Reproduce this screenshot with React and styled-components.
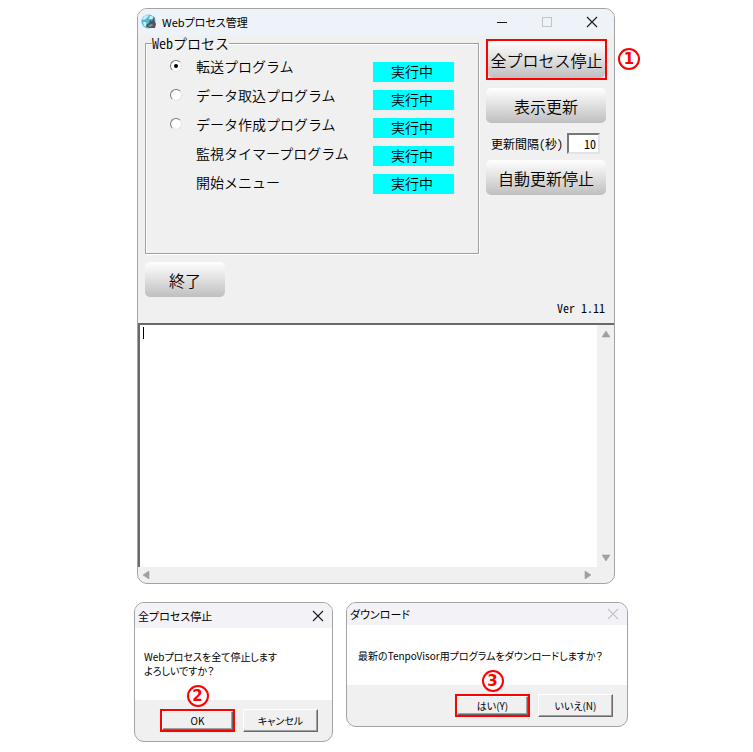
import React, { useState } from 'react'
import styled, { createGlobalStyle } from 'styled-components'

const GlobalStyle = createGlobalStyle`
  * {
    box-sizing: border-box;
  }
  body {
    margin: 0;
    background: #fff;
    color: #000;
    font-family: "Noto Sans CJK JP", sans-serif;
    font-weight: 350;
  }
  button, input, textarea {
    font-family: inherit;
    font-weight: inherit;
    color: inherit;
  }
`

const Page = styled.main`
  padding: 8px 0 8px 9px;
`

const Scene = styled.div`
  width: 100%;
  max-width: 494px;
  margin: 0 auto;
`

const AppWindow = styled.section`
  max-width: 478px;
  margin: 0 13px 18px 3px;
  border: 1px solid #a3a3a3;
  border-radius: 10px;
  background: #f0f0f0;
`

const TitleBar = styled.header`
  display: flex;
  align-items: center;
  height: 26px;
  padding: 0 15px 0 3px;
  border-radius: 9px 9px 0 0;
  background: #eef3f9;
`

const Title = styled.h1`
  flex: 1;
  margin: 0;
  padding-left: ${props => props.$inset || '0'};
  font-size: 11px;
  line-height: 20px;
  font-weight: 400;
  font-feature-settings: "palt";
`

const WindowButtons = styled.div`
  display: flex;
  gap: 31px;
`

const IconButton = styled.button`
  display: flex;
  align-items: center;
  justify-content: center;
  width: 14px;
  height: 14px;
  padding: 0;
  border: 0;
  background: none;
  color: ${props => props.$faded ? '#c4c4c8' : '#1a1a1a'};
`

const Panel = styled.div`
  display: grid;
  grid-template-columns: 1fr 121px;
  gap: 8px 7px;
  padding: 0 7px 6px;
`

const Group = styled.fieldset`
  display: flex;
  justify-content: space-between;
  min-width: 0;
  height: 219px;
  margin: 0;
  padding: 0 24px;
  border: 1px solid #a0a0a0;
  box-shadow: 1px 1px 0 #fff, inset 1px 1px 0 #fff;
`

const Legend = styled.legend`
  margin-left: -18px;
  padding: 0;
  font-size: 14px;
  line-height: 16px;
  font-feature-settings: "hwid";
`

const ProcessList = styled.div`
  display: flex;
  flex-direction: column;
`

const ProcessRow = styled.label`
  display: flex;
  align-items: center;
  gap: 14px;
  height: 29px;
  padding-left: ${props => props.$plain ? '26px' : '0'};
  font-size: 14px;
  white-space: nowrap;
`

const Radio = styled.input`
  appearance: none;
  display: grid;
  place-items: center;
  width: 12px;
  height: 12px;
  margin: 0;
  border: 1px solid;
  border-color: #777 #e3e3e3 #e3e3e3 #777;
  border-radius: 50%;
  background: #fff;
  &:checked::after {
    content: "";
    width: 4px;
    height: 4px;
    border-radius: 50%;
    background: #000;
  }
`

const StatusList = styled.div`
  display: flex;
  flex-direction: column;
  gap: 8px;
  padding-top: 11px;
`

const Status = styled.output`
  width: 81px;
  height: 20px;
  background: #00ffff;
  font-size: 14px;
  line-height: 18px;
  text-align: center;
  padding-right: 3px;
`

const Actions = styled.div`
  display: flex;
  flex-direction: column;
  padding-top: 4px;
`

const GlossyButton = styled.button`
  width: ${props => props.$width || '120px'};
  height: ${props => props.$tall ? '37px' : '35px'};
  padding: 0;
  border: 0;
  border-radius: 5px;
  background: linear-gradient(#fff, #e3e3e3 45%, #bfbfbf);
  font-size: 16px;
  line-height: 24px;
  white-space: nowrap;
`

const Highlight = styled.div`
  position: relative;
  margin-bottom: 8px;
  border: 2px solid #f00;
`

const Callout = styled.span`
  position: absolute;
  ${props => props.$side === 'right' ? 'left: 130px; top: 7px;' : 'left: calc(50% - 11px); top: -26px;'}
  width: 22px;
  height: 22px;
  border: 2px solid #f00;
  border-radius: 50%;
  background: #fff;
  color: #f00;
  font: 700 15px/18px "DejaVu Sans", sans-serif;
  text-align: center;
`

const Interval = styled.label`
  display: flex;
  align-items: center;
  justify-content: space-between;
  padding: 10px 7px 6px 5px;
  font-size: 12px;
  font-weight: 400;
  line-height: 18px;
  font-feature-settings: "hwid";
  white-space: nowrap;
`

const IntervalInput = styled.input`
  width: 33px;
  height: 21px;
  padding: 0 2px;
  border: 2px solid;
  border-color: #777 #e3e3e3 #e3e3e3 #777;
  background: #fff;
  font-size: 12px;
  font-feature-settings: "hwid";
  text-align: right;
`

const PanelFooter = styled.div`
  grid-column: 1 / -1;
  display: flex;
  justify-content: space-between;
  height: 55px;
`

const Version = styled.span`
  align-self: flex-end;
  padding-right: 2px;
  font-size: 12px;
  font-weight: 400;
  line-height: 18px;
  font-feature-settings: "hwid";
`

const LogFrame = styled.div`
  display: grid;
  grid-template-columns: 1fr 17px;
  border-top: 2px solid #696969;
`

const LogArea = styled.div`
  position: relative;
  height: 242px;
  border-left: 2px solid #696969;
`

const Log = styled.textarea`
  display: block;
  width: 100%;
  height: 100%;
  padding: 2px 4px;
  border: 0;
  outline: 0;
  resize: none;
  background: #fff;
  font-size: 12px;
`

const Caret = styled.span`
  position: absolute;
  left: 3px;
  top: 2px;
  width: 1px;
  height: 12px;
  background: #000;
`

const ScrollBar = styled.div`
  display: flex;
  flex-direction: ${props => props.$vertical ? 'column' : 'row'};
  align-items: center;
  justify-content: space-between;
  padding: ${props => props.$vertical ? '5px 0' : '0 5px'};
  height: ${props => props.$vertical ? 'auto' : '16px'};
`

const ScrollButton = styled.button`
  display: flex;
  padding: 0;
  border: 0;
  background: none;
`

const Dialogs = styled.div`
  display: grid;
  grid-template-columns: 199fr 282fr;
  align-items: start;
  gap: 13px;
`

const Dialog = styled.section`
  border: 1px solid #a3a3a3;
  border-radius: 10px;
  background: #f0f0f0;
`

const DialogTitle = styled(TitleBar)`
  height: ${props => props.$compact ? '22px' : '25px'};
  padding: 0 7px 0 3px;
  background: #f3f3f7;
`

const Message = styled.p`
  margin: 0;
  padding: ${props => props.$padding};
  background: #fff;
  font-size: 10px;
  font-weight: 400;
  line-height: 14px;
  font-feature-settings: "palt";
`

const DialogButtons = styled.div`
  display: flex;
  justify-content: flex-end;
  gap: 8px;
  padding: 9px 14px;
`

const ClassicButton = styled.button`
  width: 75px;
  height: 23px;
  padding: 0;
  border: 1px solid;
  border-color: #fff #696969 #696969 #fff;
  box-shadow: inset -1px -1px 0 #a0a0a0;
  background: #f0f0f0;
  font-size: 10px;
  font-weight: 400;
  line-height: 18px;
  font-feature-settings: "palt";
`

const ButtonHighlight = styled.div`
  position: relative;
  border: 2px solid #f00;
  ${ClassicButton} {
    display: block;
    width: 71px;
    height: 19px;
  }
`

const GlobeIcon = () => (
  <svg width="16" height="16" viewBox="0 0 16 16" aria-hidden="true">
    <circle cx="7.5" cy="7.5" r="7" fill="#4db8d6" />
    <path d="M1 5 4 1.5 8 1 6 4 3 6ZM9 1.5 13 3 11 5 8 5ZM2 8 5 8 6 13 3 12Z" fill="#c9edf5" />
    <path d="M5 11 8 9 9 6 11 7 13 3 13.5 7 15 10 14 14 9 14 5 12.5Z" fill="#50565b" />
    <path d="M7 11.5 11 10 12 11.5 9 13Z" fill="#8d9499" />
    <path d="M12.5 2.5 14 5" stroke="#a55" strokeWidth="0.7" fill="none" />
  </svg>
)

const CloseIcon = () => (
  <svg width="12" height="12" viewBox="0 0 12 12" aria-hidden="true">
    <path d="M1 1 11 11M11 1 1 11" stroke="currentColor" strokeWidth="1.1" fill="none" />
  </svg>
)

const arrows = {
  up: 'M4 1 8 7 0 7Z',
  down: 'M0 1 8 1 4 7Z',
  left: 'M0 4 6 0 6 8Z',
  right: 'M1 0 7 4 1 8Z',
}

const Arrow = ({ direction }) => (
  <ScrollButton aria-label={direction}>
    <svg width="8" height="8" viewBox="0 0 8 8">
      <path d={arrows[direction]} fill="#a0a0a0" stroke="#a0a0a0" strokeWidth="0.6" strokeLinejoin="round" />
    </svg>
  </ScrollButton>
)

const processes = [
  { name: '転送プログラム', selectable: true },
  { name: 'データ取込プログラム', selectable: true },
  { name: 'データ作成プログラム', selectable: true },
  { name: '監視タイマープログラム' },
  { name: '開始メニュー' },
]

const App = () => {
  const [selected, setSelected] = useState(0)
  const [interval, setIntervalValue] = useState('10')

  return (
    <Page>
      <GlobalStyle />
      <Scene>
        <AppWindow>
          <TitleBar>
            <GlobeIcon />
            <Title $inset="5px">Webプロセス管理</Title>
            <WindowButtons>
              <IconButton aria-label="最小化">
                <svg width="12" height="12"><path d="M1 6.5H11" stroke="currentColor" /></svg>
              </IconButton>
              <IconButton aria-label="最大化" $faded>
                <svg width="12" height="12"><rect x="1.5" y="1.5" width="9" height="9" fill="none" stroke="currentColor" /></svg>
              </IconButton>
              <IconButton aria-label="閉じる"><CloseIcon /></IconButton>
            </WindowButtons>
          </TitleBar>

          <Panel>
            <Group>
              <Legend>Webプロセス</Legend>
              <ProcessList>
                {processes.map((process, i) => (
                  <ProcessRow key={process.name} as={process.selectable ? 'label' : 'div'} $plain={!process.selectable}>
                    {process.selectable && (
                      <Radio type="radio" name="process" checked={selected === i} onChange={() => setSelected(i)} />
                    )}
                    {process.name}
                  </ProcessRow>
                ))}
              </ProcessList>
              <StatusList>
                {processes.map(process => <Status key={process.name}>実行中</Status>)}
              </StatusList>
            </Group>

            <Actions>
              <Highlight>
                <GlossyButton $width="100%" $tall>全プロセス停止</GlossyButton>
                <Callout $side="right">1</Callout>
              </Highlight>
              <GlossyButton>表示更新</GlossyButton>
              <Interval>
                更新間隔(秒)
                <IntervalInput value={interval} onChange={e => setIntervalValue(e.target.value)} />
              </Interval>
              <GlossyButton>自動更新停止</GlossyButton>
            </Actions>

            <PanelFooter>
              <GlossyButton $width="80px">終了</GlossyButton>
              <Version>Ver 1.11</Version>
            </PanelFooter>
          </Panel>

          <LogFrame>
            <LogArea>
              <Log aria-label="ログ" />
              <Caret />
            </LogArea>
            <ScrollBar $vertical>
              <Arrow direction="up" />
              <Arrow direction="down" />
            </ScrollBar>
            <ScrollBar>
              <Arrow direction="left" />
              <Arrow direction="right" />
            </ScrollBar>
          </LogFrame>
        </AppWindow>

        <Dialogs>
          <Dialog>
            <DialogTitle>
              <Title as="h2">全プロセス停止</Title>
              <IconButton aria-label="閉じる"><CloseIcon /></IconButton>
            </DialogTitle>
            <Message $padding="22px 9px">
              Webプロセスを全て停止します<br />よろしいですか？
            </Message>
            <DialogButtons>
              <ButtonHighlight>
                <ClassicButton>OK</ClassicButton>
                <Callout>2</Callout>
              </ButtonHighlight>
              <ClassicButton>キャンセル</ClassicButton>
            </DialogButtons>
          </Dialog>

          <Dialog>
            <DialogTitle $compact>
              <Title as="h2">ダウンロード</Title>
              <IconButton aria-label="閉じる" $faded><CloseIcon /></IconButton>
            </DialogTitle>
            <Message $padding="24px 11px 22px">
              最新のTenpoVisor用プログラムをダウンロードしますか？
            </Message>
            <DialogButtons>
              <ButtonHighlight>
                <ClassicButton>はい(Y)</ClassicButton>
                <Callout>3</Callout>
              </ButtonHighlight>
              <ClassicButton>いいえ(N)</ClassicButton>
            </DialogButtons>
          </Dialog>
        </Dialogs>
      </Scene>
    </Page>
  )
}

export default App
